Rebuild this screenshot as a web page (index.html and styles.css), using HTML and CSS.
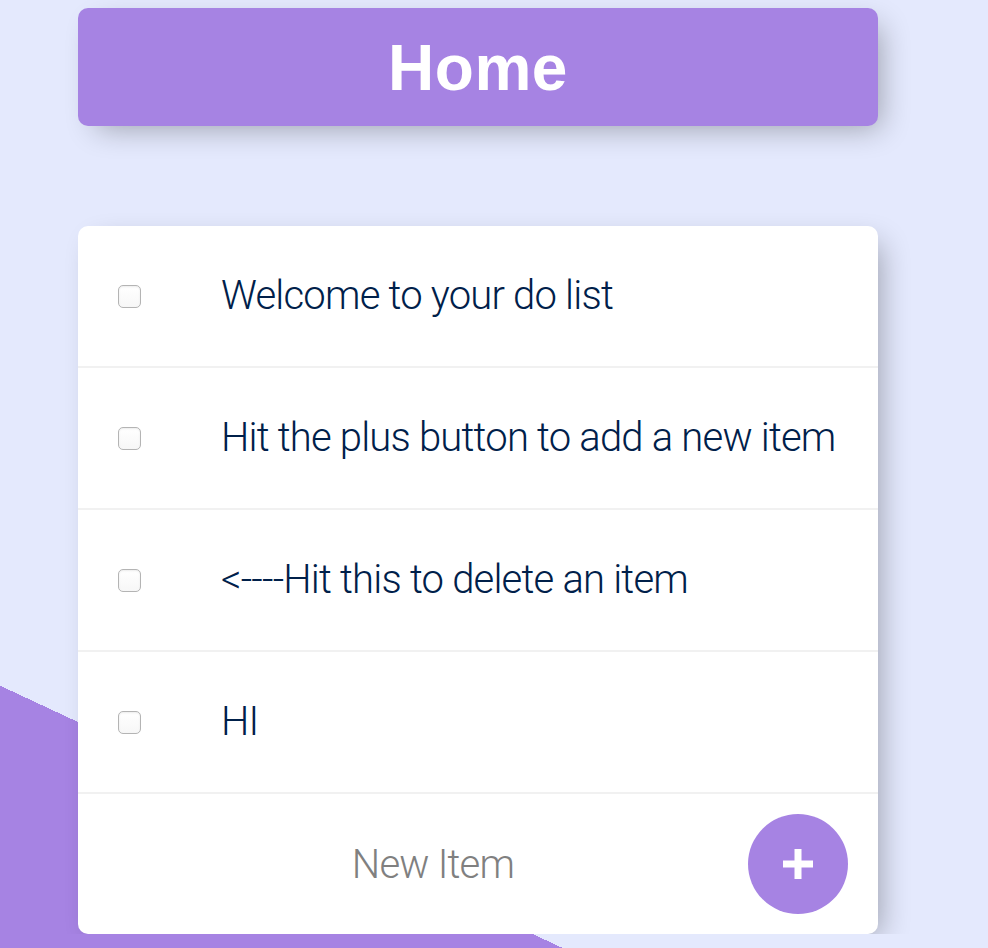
FILE: index.html
```
<!DOCTYPE html>
<html lang="en">
<head>
<meta charset="utf-8">
<title>To Do List</title>
<link rel="stylesheet" href="styles.css">
</head>
<body>
<div class="page">
  <div class="box heading">
    <h1 class="title">Home</h1>
  </div>
  <div class="box list">
    <div class="item">
      <input class="check" type="checkbox">
      <p class="text">Welcome to your do list</p>
    </div>
    <div class="item">
      <input class="check" type="checkbox">
      <p class="text">Hit the plus button to add a new item</p>
    </div>
    <div class="item">
      <input class="check" type="checkbox">
      <p class="text">&lt;----Hit this to delete an item</p>
    </div>
    <div class="item">
      <input class="check" type="checkbox">
      <p class="text">HI</p>
    </div>
    <form class="item new-form">
      <input class="new-input" type="text" name="newItem" placeholder="New Item" autocomplete="off">
      <button class="add" type="button" aria-label="Add"></button>
    </form>
  </div>
</div>
</body>
</html>
```

FILE: styles.css
```
html {
  background-color: #E4E9FD;
  background-image: linear-gradient(25deg, #A683E3 50%, #E4E9FD 50%);
  background-size: 988px 1832px;
  background-repeat: no-repeat;
  min-height: 100%;
}

body {
  margin: 0;
  font-family: Roboto, "Helvetica Neue", "Liberation Sans", sans-serif;
}

.page {
  width: 800px;
  margin-left: 78px;
  padding-top: 8px;
}

.box {
  background: #fff;
  border-radius: 10px;
  box-shadow: 10px 10px 30px -8px rgba(0, 0, 0, 0.32);
}

.heading {
  background-color: #A683E3;
  height: 118px;
  display: flex;
  align-items: center;
  justify-content: center;
}

.title {
  margin: 0;
  color: #fff;
  font-family: "Liberation Sans", Arial, sans-serif;
  font-weight: 700;
  font-size: 64px;
  line-height: 1;
  letter-spacing: 0.5px;
  padding-top: 2px;
}

.list {
  margin-top: 100px;
}

.item {
  min-height: 140px;
  display: flex;
  align-items: center;
  border-bottom: 2px solid #F1F1F1;
}

.item:last-child {
  border-bottom: 0;
}

.check {
  -webkit-appearance: none;
  appearance: none;
  width: 23px;
  height: 23px;
  margin: 0 40px;
  flex: none;
  border: 1.5px solid #B4B4B4;
  border-radius: 5px;
  background: linear-gradient(#ffffff, #f7f7f7);
  box-shadow: inset 0 1px 2px rgba(0, 0, 0, 0.08);
  box-sizing: border-box;
}

.text {
  margin: 0;
  padding: 0 0 0 40px;
  font-size: 40px;
  font-weight: 300;
  letter-spacing: -0.8px;
  color: #00204a;
  line-height: 1.2;
  white-space: nowrap;
  font-feature-settings: "calt" 0, "liga" 0;
}

.new-form {
  margin-left: 40px;
}

.new-input {
  width: 630px;
  height: 120px;
  box-sizing: border-box;
  border: none;
  background: transparent;
  text-align: center;
  font-family: Roboto, "Helvetica Neue", "Liberation Sans", sans-serif;
  font-size: 40px;
  font-weight: 300;
  letter-spacing: -0.8px;
  color: #00204a;
  padding: 0;
}

.new-input::placeholder {
  color: #808080;
  opacity: 1;
}

.add {
  position: relative;
  width: 100px;
  height: 100px;
  flex: none;
  border: 0;
  border-radius: 50%;
  background-color: #A683E3;
  padding: 0;
}

.add::before,
.add::after {
  content: "";
  position: absolute;
  background: #fff;
  left: 50%;
  top: 50%;
  transform: translate(-50%, -50%);
}

.add::before {
  width: 30px;
  height: 7px;
}

.add::after {
  width: 7px;
  height: 30px;
}
```
